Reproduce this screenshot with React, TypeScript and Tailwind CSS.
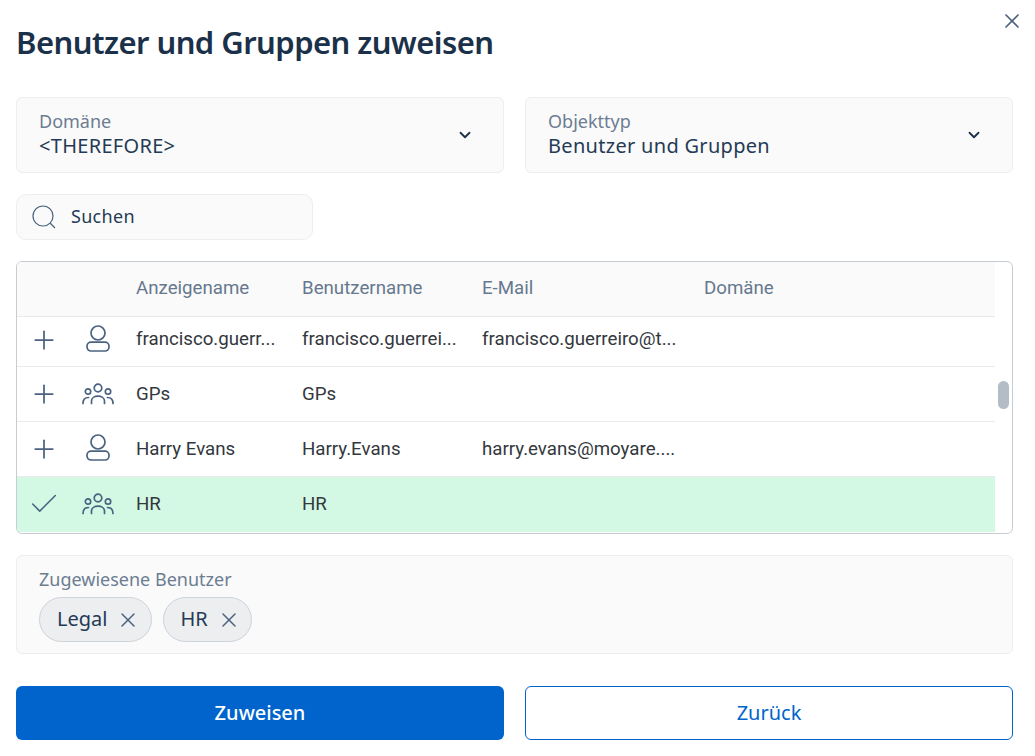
import { ChevronDown, Check, Plus, X } from "lucide-react"

const ui = { fontFamily: '"Noto Sans", sans-serif' }

const PersonIcon = () => (
  <svg width="24" height="27" viewBox="0 0 24 27" fill="none" stroke="#4b6380" strokeWidth="1.7" className="-translate-y-[1px] translate-x-[1px]">
    <circle cx="12" cy="8" r="7" />
    <rect x="1" y="17.2" width="22" height="8.8" rx="4" />
  </svg>
)

const GroupIcon = () => (
  <svg width="32" height="22" viewBox="0 0 32 22" fill="none" stroke="#4b6380" strokeWidth="1.7" strokeLinecap="round" className="translate-x-[1px]">
    <circle cx="16" cy="5" r="3.8" />
    <circle cx="6" cy="8.5" r="2.7" />
    <circle cx="26" cy="8.5" r="2.7" />
    <path d="M9.5 20.5v-2.5c0-6.5 13-6.5 13 0v2.5" />
    <path d="M1 20.5c0-3.5 1.5-6 5.5-6" />
    <path d="M31 20.5c0-3.5-1.5-6-5.5-6" />
  </svg>
)

const SearchIcon = () => (
  <svg width="24" height="24" viewBox="0 0 24 24" fill="none" stroke="#4b6380" strokeWidth="1.2">
    <circle cx="11" cy="11" r="10" />
    <path d="M18 18l5 5" />
  </svg>
)

const rows = [
  { h: "h-[50px] pb-[4px]", user: true, name: "francisco.guerr...", login: "francisco.guerrei...", mail: "francisco.guerreiro@t..." },
  { h: "h-[55px] pb-[0.5px]", user: false, name: "GPs", login: "GPs", mail: "" },
  { h: "h-[55px] pb-[0.5px]", user: true, name: "Harry Evans", login: "Harry.Evans", mail: "harry.evans@moyare...." },
]

const gridCols = "grid grid-cols-[54px_65px_166px_180px_222px_1fr] items-center"

function SelectBox({ label, value }: { label: string; value: string }) {
  return (
    <div className="flex h-[76px] items-center justify-between rounded-md border border-[#eceef0] bg-[#fafafa] pb-[2px] pl-[22px] pr-[29px]">
      <div className="flex flex-col">
        <span className="text-[18px] leading-[24px] text-[#6c7d92]">{label}</span>
        <span className="text-[20px] leading-[26px] tracking-[0.3px] text-[#253b55]">{value}</span>
      </div>
      <ChevronDown size={18} strokeWidth={2.4} className="translate-y-[1px] text-[#1c3049]" />
    </div>
  )
}

function Chip({ label, pad }: { label: string; pad: string }) {
  return (
    <div className={`flex h-[45px] items-center gap-[9px] rounded-full border border-[#ced3d9] bg-[#eceef0] pb-[2px] ${pad}`}>
      <span className="text-[20px] text-[#253b55]">{label}</span>
      <X size={24} strokeWidth={1.5} className="translate-y-[1px] text-[#4b6380]" />
    </div>
  )
}

export default function App() {
  return (
    <div style={ui} className="relative h-[756px] w-[1035px] overflow-hidden bg-white pl-4 pr-[22px]">
      <button className="absolute right-[11px] top-[9px] text-[#4b6380]">
        <X size={24} strokeWidth={1.7} />
      </button>

      <h1 className="flex h-[97px] items-start pt-[20px] text-[31px] font-semibold leading-[44px] tracking-[-0.55px] text-[#1b3149]">
        Benutzer und Gruppen zuweisen
      </h1>

      <div className="grid grid-cols-2 gap-[21px]">
        <SelectBox label="Domäne" value="<THEREFORE>" />
        <SelectBox label="Objekttyp" value="Benutzer und Gruppen" />
      </div>

      <div className="mt-[21px] flex h-[46px] w-[297px] items-center gap-[15px] rounded-[10px] border border-[#eceef0] bg-[#fafafa] pl-[15px]">
        <SearchIcon />
        <span className="pb-[2px] text-[18px] tracking-[0.3px] text-[#253b55]">Suchen</span>
      </div>

      <div className="relative mt-[21px] h-[273px] overflow-hidden rounded-md border border-[#c6ccd3] pr-[17px]" style={{ fontFamily: "Roboto, sans-serif" }}>
        <div className={`${gridCols} h-[55px] border-b border-[#e9eaec] bg-[#fafafa] pb-[1px] text-[18.7px] text-[#66788e]`}>
          <span />
          <span />
          <span>Anzeigename</span>
          <span>Benutzername</span>
          <span>E-Mail</span>
          <span>Domäne</span>
        </div>
        {rows.map((r) => (
          <div key={r.name} className={`${gridCols} ${r.h} border-b border-[#e9eaec] text-[18.7px] text-[#33383d]`}>
            <Plus size={30} strokeWidth={1.4} className="ml-[12px] text-[#4b6380]" />
            <div className="flex w-[52px] justify-center">{r.user ? <PersonIcon /> : <GroupIcon />}</div>
            <span className="whitespace-nowrap">{r.name}</span>
            <span className="whitespace-nowrap">{r.login}</span>
            <span className="whitespace-nowrap">{r.mail}</span>
            <span />
          </div>
        ))}
        <div className={`${gridCols} h-[55px] bg-[#d3f8e3] pb-[1px] text-[18.7px] text-[#33383d]`}>
          <Check size={34} strokeWidth={1.1} className="ml-[10px] text-[#4b6380]" />
          <div className="flex w-[52px] justify-center">
            <GroupIcon />
          </div>
          <span>HR</span>
          <span>HR</span>
          <span />
          <span />
        </div>
        <div className="absolute right-[3px] top-[119px] h-[28px] w-[11px] rounded-full bg-[#b4bcc5]" />
      </div>

      <div className="mt-[21px] h-[99px] rounded-md border border-[#eceef0] bg-[#fafafa] pl-[22px] pt-[11px]">
        <div className="text-[18px] leading-[24px] text-[#6c7d92]">Zugewiesene Benutzer</div>
        <div className="mt-[6px] flex gap-[11px]">
          <Chip label="Legal" pad="pl-[17px] pr-[11px]" />
          <Chip label="HR" pad="pl-[16px] pr-[10px]" />
        </div>
      </div>

      <div className="mt-[32px] grid grid-cols-2 gap-[21px]">
        <button className="h-[54px] rounded-md bg-[#0064cc] text-[20px] font-medium text-white">Zuweisen</button>
        <button className="h-[54px] rounded-md border border-[#0064cc] bg-white text-[20px] text-[#0064cc]">Zurück</button>
      </div>
    </div>
  )
}
